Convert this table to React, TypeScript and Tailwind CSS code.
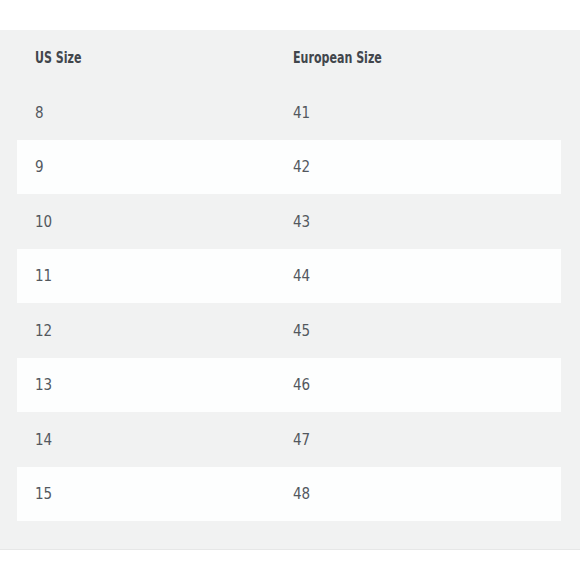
import React from 'react';

const sizes: [string, string][] = [
    ['8', '41'],
    ['9', '42'],
    ['10', '43'],
    ['11', '44'],
    ['12', '45'],
    ['13', '46'],
    ['14', '47'],
    ['15', '48'],
];

// header face is narrower than anything installed, so squeeze it
function HeadCell({ children }: { children: React.ReactNode }) {
    return (
        <div className="pl-[18px] pt-[2px]">
            <span className="inline-block origin-left scale-x-[0.82]">{children}</span>
        </div>
    );
}

export default function App() {
    return (
        <div className="w-[580px] h-[580px] bg-white pt-[30px]" style={{ fontFamily: '"DejaVu Sans Condensed", "DejaVu Sans", sans-serif' }}>
            <div className="bg-[#f1f2f2] pb-[28px] border-b border-[#e6e7e7]">
                <div className="ml-[17px] mr-[19px]">
                    <div className="grid grid-cols-[258px_1fr] h-[55px] items-center text-[15px] font-bold text-[#41464c]">
                        <HeadCell>US Size</HeadCell>
                        <HeadCell>European Size</HeadCell>
                    </div>
                    {sizes.map(([us, eu], i) => (
                        <div
                            key={us}
                            className={`grid grid-cols-[258px_1fr] h-[54.5px] items-center text-[15px] text-[#53585e] ${i % 2 === 1 ? 'bg-[#fdfefe]' : ''}`}
                        >
                            <div className="pl-[18px] pt-[1px]">{us}</div>
                            <div className="pl-[18px] pt-[1px]">{eu}</div>
                        </div>
                    ))}
                </div>
            </div>
        </div>
    );
}
